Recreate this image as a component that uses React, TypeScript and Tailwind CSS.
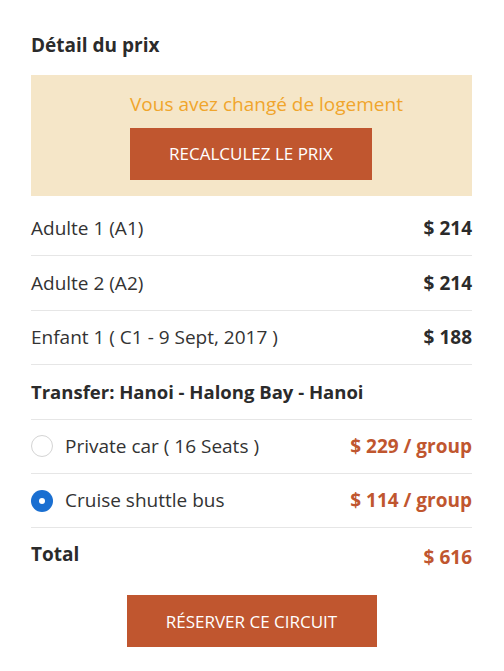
import { useState } from "react";

const rows = [
  { label: "Adulte 1 (A1)", price: "$ 214" },
  { label: "Adulte 2 (A2)", price: "$ 214" },
  { label: "Enfant 1 ( C1 - 9 Sept, 2017 )", price: "$ 188" },
];

const transfers = [
  { id: "car", label: "Private car ( 16 Seats )", price: "$ 229 / group" },
  { id: "bus", label: "Cruise shuttle bus", price: "$ 114 / group" },
];

function Radio({ checked }: { checked: boolean }) {
  if (checked) {
    return (
      <span className="flex h-[22px] w-[22px] items-center justify-center rounded-full bg-[#1a6fd1]">
        <span className="h-[6px] w-[6px] rounded-full bg-white" />
      </span>
    );
  }
  return <span className="h-[22px] w-[22px] rounded-full border border-[#d4d4d4] bg-white" />;
}

export default function App() {
  const [transfer, setTransfer] = useState("bus");

  return (
    <div className="min-h-[671px] bg-white font-['Open_Sans',sans-serif] text-[#333]">
      <div className="ml-[31px] w-[441px] pt-[31px]">
        <h2 className="text-[19px] font-bold leading-7 text-[#2b2b2b]">Détail du prix</h2>

        <div className="mt-[16px] flex h-[121px] flex-col bg-[#f5e6c8] pl-[99px] pt-[15px]">
          <p className="text-[19px] leading-7 text-[#f0a52c]">Vous avez changé de logement</p>
          <button className="mt-[10px] h-[52px] w-[242px] bg-[#c0562f] text-[17px] text-white">
            RECALCULEZ LE PRIX
          </button>
        </div>

        <div className="mt-[6px]">
          {rows.map((r) => (
            <div
              key={r.label}
              className="flex h-[54.4px] items-center justify-between border-b border-[#e6e6e6] text-[19px]"
            >
              <span>{r.label}</span>
              <span className="font-bold text-[#2b2b2b]">{r.price}</span>
            </div>
          ))}
          <div className="flex h-[54.4px] items-center border-b border-[#e6e6e6] text-[18.5px] font-bold text-[#2b2b2b]">
            Transfer: Hanoi - Halong Bay - Hanoi
          </div>
          {transfers.map((t) => (
            <div
              key={t.id}
              onClick={() => setTransfer(t.id)}
              className="flex h-[54.4px] cursor-pointer items-center justify-between border-b border-[#e6e6e6] text-[19px]"
            >
              <span className="flex items-center gap-[12px]">
                <Radio checked={transfer === t.id} />
                <span>{t.label}</span>
              </span>
              <span className="font-bold text-[#c0562f]">{t.price}</span>
            </div>
          ))}
          <div className="flex h-[56px] justify-between pt-[12px] leading-7">
            <span className="text-[19px] font-bold text-[#2b2b2b]">Total</span>
            <span className="pt-[3px] text-[19px] font-bold text-[#c0562f]">$ 616</span>
          </div>
        </div>

        <div className="mt-[11px] flex justify-center">
          <button className="h-[52px] w-[250px] bg-[#c0562f] text-[17px] text-white">
            RÉSERVER CE CIRCUIT
          </button>
        </div>
      </div>
    </div>
  );
}
